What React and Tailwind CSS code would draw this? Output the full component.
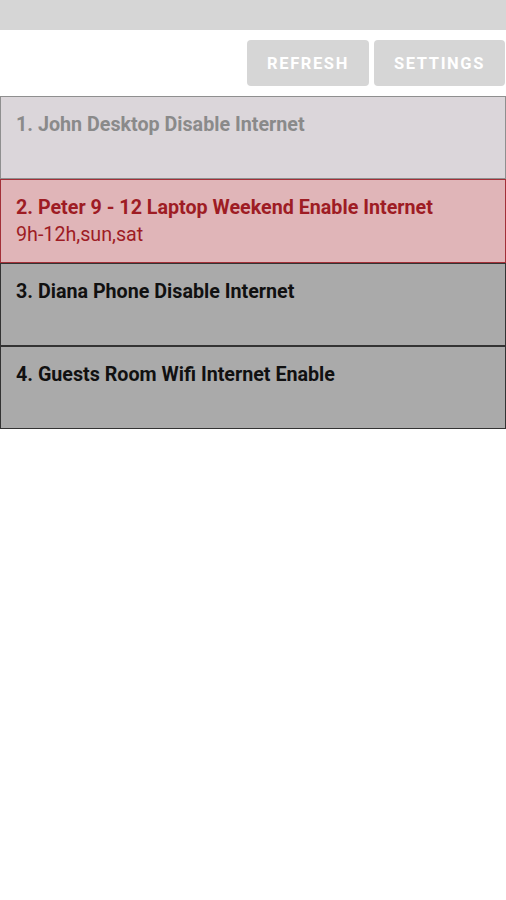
import React from "react";

const rows = [
  { title: "1. John Desktop Disable Internet", cls: "bg-[#dbd6da] border-[#8f8f8f] text-[#8a8a8a]" },
  { title: "2. Peter 9 - 12 Laptop Weekend Enable Internet", sub: "9h-12h,sun,sat", cls: "bg-[#e0b5b8] border-[#a33038] text-[#9e1c24]" },
  { title: "3. Diana Phone Disable Internet", cls: "bg-[#aaaaaa] border-[#333333] text-[#111111]" },
  { title: "4. Guests Room Wifi Internet Enable", cls: "bg-[#aaaaaa] border-[#333333] text-[#111111]" },
];

export default function App() {
  return (
    <div className="w-[506px] h-[900px] bg-white font-['Roboto',sans-serif]">
      <div className="h-[30px] bg-[#d6d6d6]" />
      <div className="flex justify-end gap-[5px] pt-[10px] pr-[1px] h-[66px]">
        <button className="w-[122px] h-[46px] pt-[2px] rounded-[4px] bg-[#d6d6d6] text-white font-bold text-[16.5px] tracking-[1.6px]">REFRESH</button>
        <button className="w-[131px] h-[46px] pt-[2px] rounded-[4px] bg-[#d6d6d6] text-white font-bold text-[16.5px] tracking-[1.6px]">SETTINGS</button>
      </div>
      <div className="flex flex-col">
        {rows.map((r, i) => (
          <div key={i} className={`h-[83.3px] border-[1.5px] px-[15px] pt-[14px] ${r.cls}`}>
            <div className="font-bold text-[19.7px] leading-[27px]">{r.title}</div>
            {r.sub && <div className="text-[19.7px] leading-[27px]">{r.sub}</div>}
          </div>
        ))}
      </div>
    </div>
  );
}
